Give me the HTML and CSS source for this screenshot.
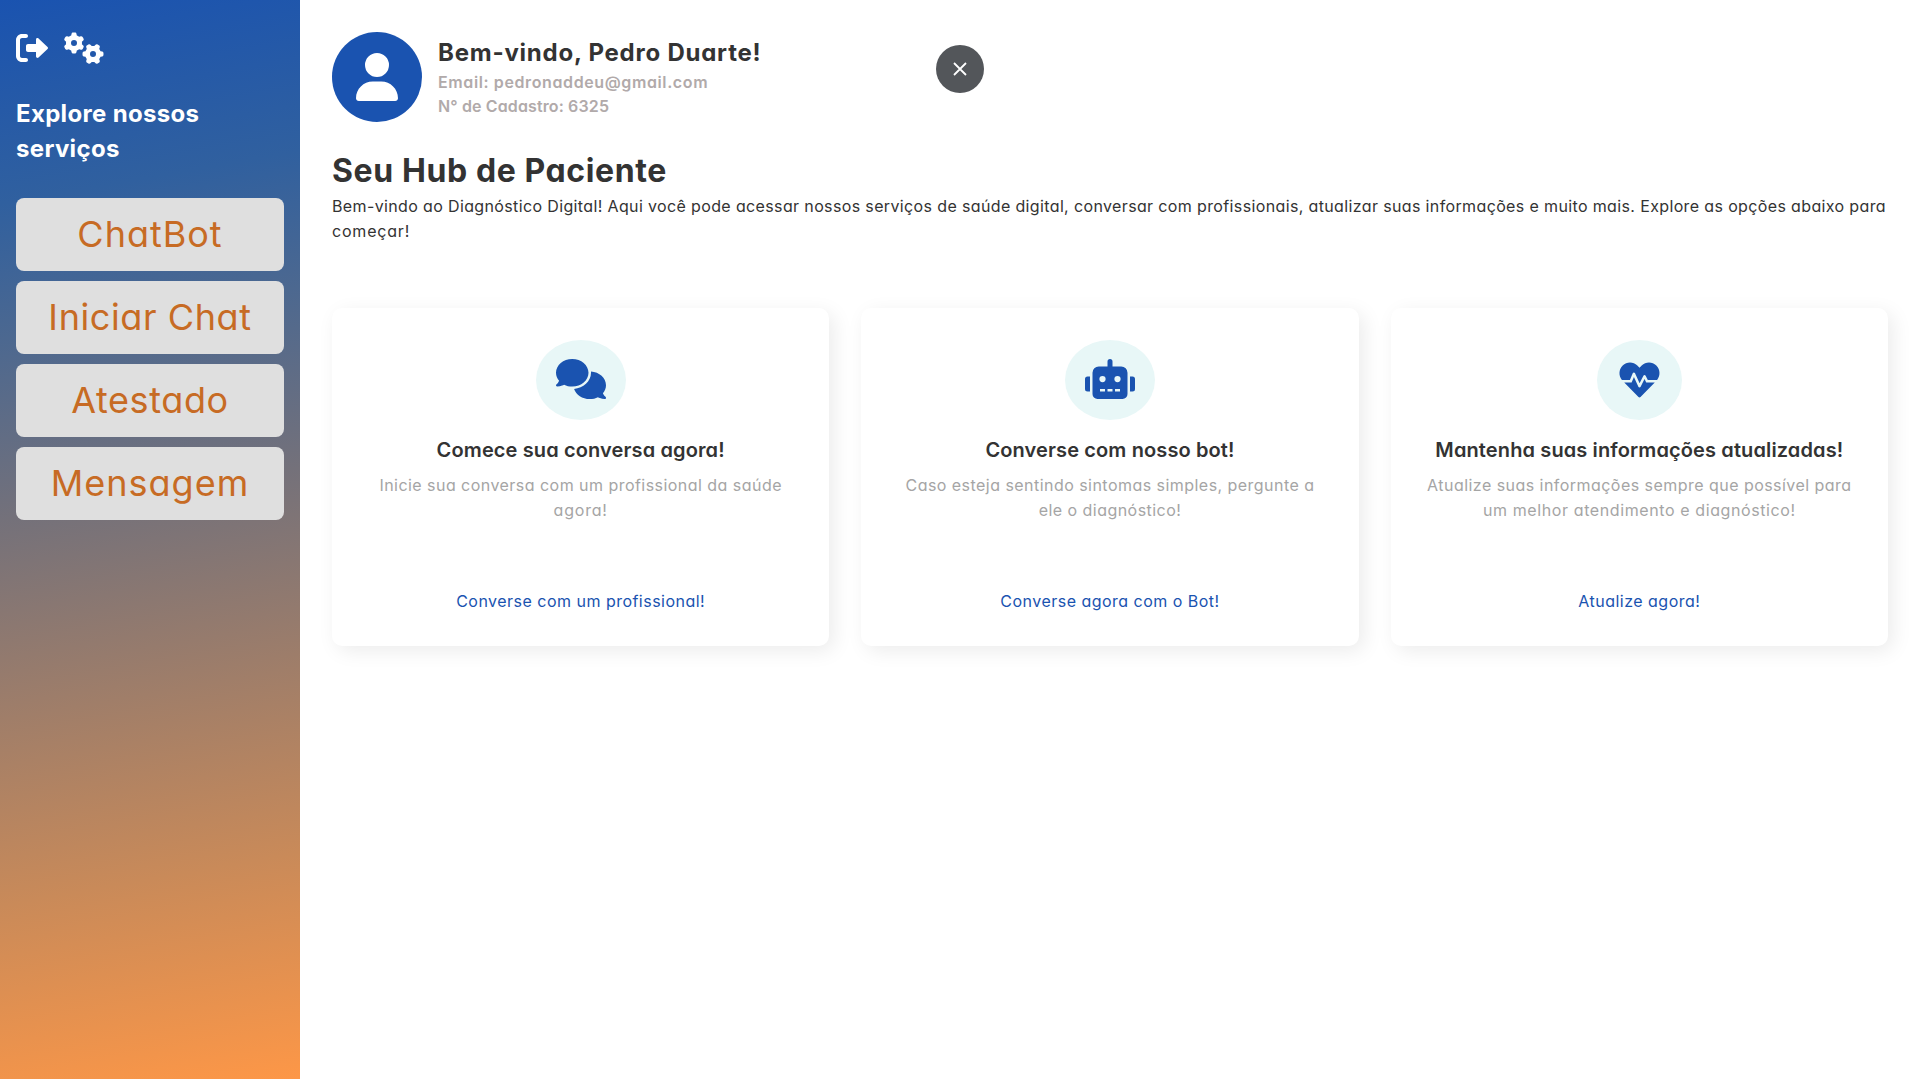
FILE: index.html
```html
<!DOCTYPE html>
<html lang="pt-BR">
<head>
<meta charset="utf-8">
<title>Hub de Paciente</title>
<link rel="stylesheet" href="styles.css">
</head>
<body>
<aside class="sidebar">
  <div class="tools">
    <svg class="icon-exit" viewBox="0 0 512 512"><path d="M96 480h64C177.7 480 192 465.7 192 448S177.7 416 160 416H96c-17.67 0-32-14.33-32-32V128c0-17.67 14.33-32 32-32h64C177.7 96 192 81.67 192 64S177.7 32 160 32H96C42.98 32 0 74.98 0 128v256C0 437 42.98 480 96 480zM504.8 238.5l-144.1-136c-6.975-6.578-17.2-8.375-26-4.594c-8.803 3.797-14.51 12.47-14.51 22.05l-.0918 72l-128-.001c-17.69 0-32.02 14.33-32.02 32v64c0 17.67 14.34 32 32.02 32l128 .001l.0918 71.1c0 9.578 5.707 18.25 14.51 22.05c8.803 3.781 19.03 1.984 26-4.594l144.1-136C514.4 264.4 514.4 247.6 504.8 238.5z"/></svg>
    <svg class="icon-gears" viewBox="0 0 640 512"><defs><path id="gear" d="M308.5 135.3c7.1-6.3 9.9-16.2 6.2-25c-2.3-5.3-4.8-10.5-7.6-15.5L304 89.4c-3-5-6.3-9.9-9.8-14.6c-5.7-7.6-15.7-10.1-24.7-7.1l-28.2 9.3c-10.7-8.8-23-16-36.2-20.9L199 27.1c-1.9-9.3-9.1-16.7-18.5-17.8C173.9 8.4 167.2 8 160.4 8l-.7 0c-6.8 0-13.5 .4-20.1 1.2c-9.4 1.1-16.6 8.6-18.5 17.8L115 56.1c-13.3 5-25.5 12.1-36.2 20.9L50.5 67.8c-9-3-19-.5-24.7 7.1c-3.5 4.7-6.8 9.6-9.9 14.6l-3 5.3c-2.8 5-5.3 10.2-7.6 15.6c-3.7 8.7-.9 18.6 6.2 25l22.2 19.8C32.6 161.9 32 168.9 32 176s.6 14.1 1.7 20.9L11.5 216.7c-7.1 6.3-9.9 16.2-6.2 25c2.3 5.3 4.8 10.5 7.6 15.6l3 5.2c3 5.1 6.3 9.9 9.9 14.6c5.7 7.6 15.7 10.1 24.7 7.1l28.2-9.3c10.7 8.8 23 16 36.2 20.9l6.1 29.1c1.9 9.3 9.1 16.7 18.5 17.8c6.7 .8 13.5 1.2 20.4 1.2s13.7-.4 20.4-1.2c9.4-1.1 16.6-8.6 18.5-17.8l6.1-29.1c13.3-5 25.5-12.1 36.2-20.9l28.2 9.3c9 3 19 .5 24.7-7.1c3.5-4.7 6.8-9.5 9.8-14.6l3.1-5.4c2.8-5 5.3-10.2 7.6-15.5c3.7-8.7 .9-18.6-6.2-25l-22.2-19.8c1.1-6.8 1.7-13.8 1.7-20.9s-.6-14.1-1.7-20.9l22.2-19.8zM112 176a48 48 0 1 1 96 0 48 48 0 1 1 -96 0z"/></defs><use href="#gear"/><use href="#gear" transform="matrix(0 1 -1 0 640 192)"/></svg>
  </div>
  <h2 class="side-title">Explore nossos<br>serviços</h2>
  <nav class="menu">
    <a class="menu-item menu-item--wide">ChatBot</a>
    <a class="menu-item">Iniciar Chat</a>
    <a class="menu-item">Atestado</a>
    <a class="menu-item menu-item--wide">Mensagem</a>
  </nav>
</aside>
<main class="content">
  <header class="profile">
    <div class="avatar"><svg class="icon-user" viewBox="0 0 448 512"><path d="M224 256A128 128 0 1 0 224 0a128 128 0 1 0 0 256zm-45.7 48C79.8 304 0 383.8 0 482.3C0 498.7 13.3 512 29.7 512H418.3c16.4 0 29.7-13.3 29.7-29.7C448 383.8 368.2 304 269.7 304H178.3z"/></svg></div>
    <div class="who">
      <h2 class="name">Bem-vindo, Pedro Duarte!</h2>
      <p class="meta meta--email">Email: pedronaddeu@gmail.com</p>
      <p class="meta">N° de Cadastro: 6325</p>
    </div>
  </header>
  <h1 class="title">Seu Hub de Paciente</h1>
  <p class="intro">Bem-vindo ao Diagnóstico Digital! Aqui você pode acessar nossos serviços de saúde digital, conversar com profissionais, atualizar suas informações e muito mais. Explore as opções abaixo para<br><span class="loose">começar!</span></p>
  <section class="cards">
    <article class="card">
      <div class="badge"><svg class="icon-wide" viewBox="0 0 640 512"><path d="M208 352c114.9 0 208-78.8 208-176S322.9 0 208 0S0 78.8 0 176c0 38.6 14.7 74.3 39.6 103.4c-3.5 9.4-8.7 17.7-14.2 24.7c-4.8 6.2-9.7 11-13.3 14.3c-1.8 1.6-3.3 2.9-4.3 3.7c-.5 .4-.9 .7-1.1 .8l-.2 .2C1 327.2-1.4 334.4 .8 340.9S9.1 352 16 352c21.8 0 43.8-5.6 62.1-12.5c9.2-3.5 17.8-7.4 25.2-11.4C134.1 343.3 169.8 352 208 352zM448 176c0 112.3-99.1 196.9-216.5 207C255.8 457.4 336.4 512 432 512c38.2 0 73.9-8.7 104.7-23.9c7.5 4 16 7.9 25.2 11.4c18.3 6.9 40.3 12.5 62.1 12.5c6.9 0 13.1-4.5 15.2-11.1c2.1-6.6-.2-13.8-5.8-17.9l-.2-.2c-.2-.2-.6-.4-1.1-.8c-1-.8-2.5-2-4.3-3.7c-3.6-3.3-8.5-8.1-13.3-14.3c-5.5-7-10.7-15.4-14.2-24.7c24.9-29 39.6-64.7 39.6-103.4c0-92.8-84.9-168.9-192.6-175.5c.4 5.1 .6 10.3 .6 15.5z"/></svg></div>
      <h3 class="card-title">Comece sua conversa agora!</h3>
      <p class="card-text">Inicie sua conversa com um profissional da saúde<br><span class="loose">agora!</span></p>
      <a class="card-link">Converse com um profissional!</a>
    </article>
    <article class="card">
      <div class="badge"><svg class="icon-wide" viewBox="0 0 640 512"><path d="M32 224H64V416H32A32 32 0 0 1 0 384V256A32 32 0 0 1 32 224Zm512-48V448a64 64 0 0 1-64 64H160a64 64 0 0 1-64-64V176a80 80 0 0 1 80-80H288V32a32 32 0 0 1 64 0V96H464A80 80 0 0 1 544 176ZM264 256a40 40 0 1 0-40 40A40 40 0 0 0 264 256Zm-8 128H192v32h64Zm96 0H288v32h64ZM456 256a40 40 0 1 0-40 40A40 40 0 0 0 456 256Zm-8 128H384v32h64ZM640 256V384a32 32 0 0 1-32 32H576V224h32A32 32 0 0 1 640 256Z"/></svg></div>
      <h3 class="card-title">Converse com nosso bot!</h3>
      <p class="card-text">Caso esteja sentindo sintomas simples, pergunte a<br>ele o diagnóstico!</p>
      <a class="card-link">Converse agora com o Bot!</a>
    </article>
    <article class="card">
      <div class="badge"><svg class="icon-heart" viewBox="-32 0 576 512"><path d="M320.2 243.8l-49.7 99.4c-6 12.1-23.4 11.7-28.9-.6l-56.9-126.3-30 71.7H60.6l182.5 186.5c7.1 7.3 18.6 7.3 25.7 0L451.4 288H342.3l-22.1-44.2zM473.7 73.9l-2.4-2.5c-51.5-52.6-135.8-52.6-187.4 0L256 100l-27.9-28.5c-51.5-52.7-135.9-52.7-187.4 0l-2.4 2.4C-10.4 123.7-12.5 203 31 256h102.4l35.9-86.2c5.4-12.9 23.6-13.2 29.4-.4l58.2 129.3 49-97.9c5.9-11.8 22.7-11.8 28.6 0l27.6 55.2H481c43.5-53 41.4-132.3-7.3-182.1z"/></svg></div>
      <h3 class="card-title">Mantenha suas informações atualizadas!</h3>
      <p class="card-text">Atualize suas informações sempre que possível para<br><span class="open">um melhor atendimento e diagnóstico!</span></p>
      <a class="card-link">Atualize agora!</a>
    </article>
  </section>
</main>
<button class="close" aria-label="Fechar"><svg class="icon-x" viewBox="0 0 14 14"><path d="M1 1L13 13M13 1L1 13"/></svg></button>
</body>
</html>
```
FILE: styles.css
```css
* { box-sizing: border-box; margin: 0; padding: 0; }
body { display: flex; min-height: 1079px; background: #fff; color: #333; font-family: Inter, "Open Sans", sans-serif; font-feature-settings: "cv11"; font-size: 16px; }
svg { display: block; fill: currentColor; }
.sidebar { width: 300px; flex: none; padding: 32px 16px; background: linear-gradient(170deg, #1a53b0, #30609f 18%, #4c6890 30%, #74717a 46%, #c98a59 80%, #fd9747); color: #fff; }
.tools { display: flex; gap: 16px; }
.icon-exit { width: 32px; height: 32px; }
.icon-gears { width: 40px; height: 32px; }
.side-title { margin-top: 32px; font-size: 24px; line-height: 35px; font-weight: 700; letter-spacing: .33px; white-space: nowrap; }
.menu { display: flex; flex-direction: column; gap: 10px; margin-top: 32px; }
.menu-item { height: 73px; border-radius: 8px; background: #dfdfdf; color: #c76b24; font-size: 36px; line-height: 73px; letter-spacing: .6px; text-align: center; white-space: nowrap; }
.menu-item--wide { letter-spacing: 1px; }
.content { flex: 1; padding: 32px 31px 32px 32px; }
.profile { display: flex; align-items: center; gap: 16px; }
.avatar { display: grid; place-items: center; width: 90px; height: 90px; border-radius: 50%; background: #1a53b0; color: #fff; }
.icon-user { width: 42px; height: 48px; }
.name { padding-top: 2px; font-size: 24px; line-height: 34px; font-weight: 700; letter-spacing: .77px; }
.meta { font-weight: 600; line-height: 24px; letter-spacing: .13px; color: #b1aaaa; }
.meta--email { letter-spacing: .61px; }
.who { padding-bottom: 2px; }
.title { margin-top: 24px; padding-top: 1px; font-size: 32px; line-height: 47px; font-weight: 700; letter-spacing: .6px; }
.intro { line-height: 25px; letter-spacing: .365px; white-space: nowrap; }
.loose { letter-spacing: .8px; }
.open { letter-spacing: .6px; }
.cards { display: grid; grid-template-columns: repeat(3, 1fr); gap: 32px; margin-top: 64px; }
.card { display: flex; flex-direction: column; align-items: center; height: 338px; padding: 32px; border-radius: 10px; background: #fff; box-shadow: 5px 5px 20px rgba(0, 0, 0, .08); text-align: center; white-space: nowrap; }
.badge { padding: 20px; border-radius: 50%; background: #e8f7f7; color: #1a53b0; }
.icon-wide { width: 50px; height: 40px; margin-top: -1px; margin-bottom: 1px; }
.icon-heart { width: 45px; height: 40px; }
.card-title { margin-top: 15px; font-size: 20px; line-height: 30px; font-weight: 600; letter-spacing: .12px; }
.card-text { margin-top: 8px; line-height: 25px; letter-spacing: .46px; color: #a5a5a5; }
.card-link { margin-top: auto; line-height: 25px; letter-spacing: .48px; color: #1a53b0; }
.close { position: absolute; left: 936px; top: 45px; display: grid; place-items: center; width: 48px; height: 48px; border: 0; border-radius: 50%; background: #53565a; color: #fff; }
.icon-x { width: 14px; height: 14px; fill: none; stroke: currentColor; stroke-width: 1.8; }
```
